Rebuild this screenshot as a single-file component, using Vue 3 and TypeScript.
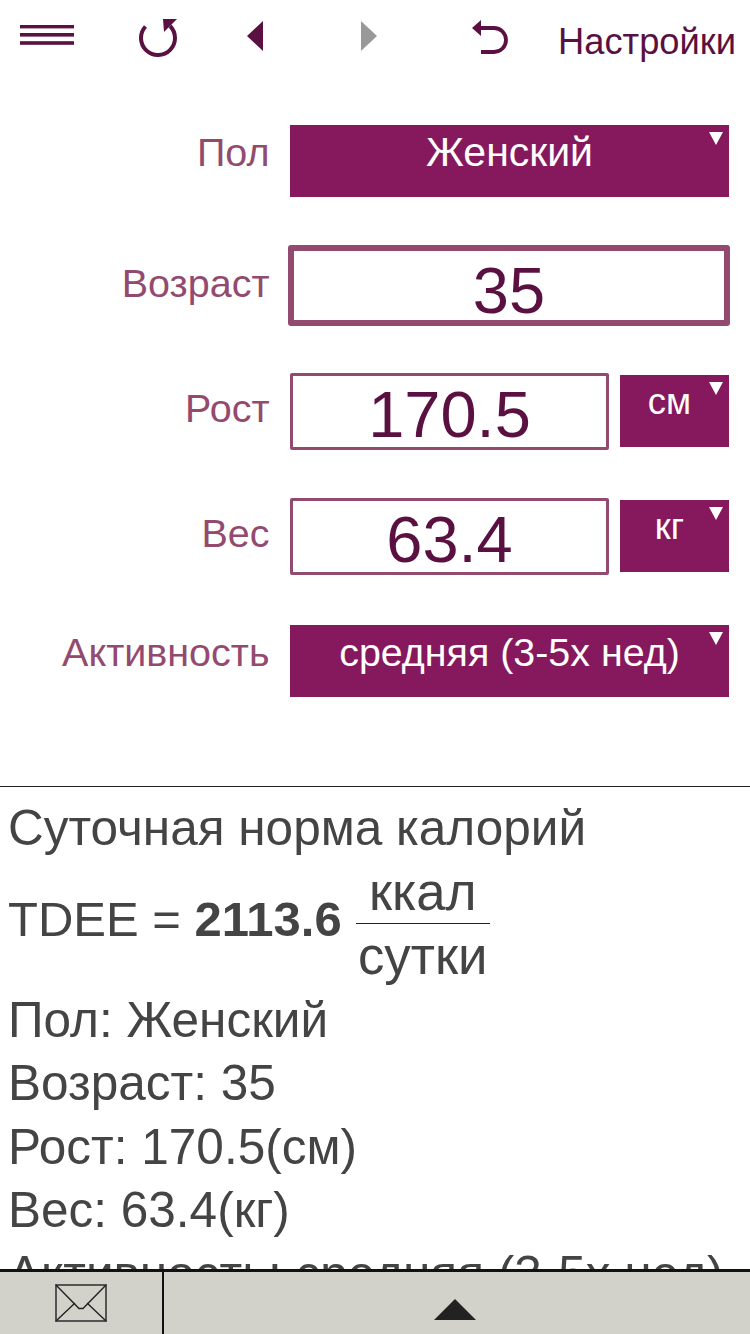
<script setup lang="ts">
const results = ['Пол: Женский', 'Возраст: 35', 'Рост: 170.5(см)', 'Вес: 63.4(кг)', 'Активность: средняя (3-5х нед)']
</script>

<template>
  <div class="page">
    <header class="toolbar">
      <svg class="icon menu" width="54" height="20" viewBox="0 0 54 20">
        <rect y="0" width="54" height="3.4" fill="#5a1040" />
        <rect y="8" width="54" height="3.6" fill="#5a1040" />
        <rect y="16.2" width="54" height="3.6" fill="#5a1040" />
      </svg>
      <svg class="icon reload" width="40" height="40" viewBox="0 0 40 40">
        <path d="M6.5 8.5 A17 17 0 1 0 31 8" fill="none" stroke="#5a1040" stroke-width="4" />
        <path d="M24 1 H38 L25 14 Z" fill="#5a1040" />
      </svg>
      <svg class="icon prev" width="16" height="30" viewBox="0 0 16 30">
        <path d="M16 0 V30 L0 15 Z" fill="#5a1040" />
      </svg>
      <svg class="icon next" width="16" height="30" viewBox="0 0 16 30">
        <path d="M0 0 V30 L16 15 Z" fill="#999" />
      </svg>
      <svg class="icon undo" width="37" height="34" viewBox="0 0 37 34">
        <path d="M7 8 H22 A12 12 0 0 1 22 32 H9" fill="none" stroke="#5a1040" stroke-width="3.8" />
        <path d="M9 0 V16 L0 8 Z" fill="#5a1040" />
      </svg>
      <span class="settings">Настройки</span>
    </header>

    <section class="form">
      <div class="row row--select">
        <label class="label">Пол</label>
        <div class="select">Женский<i class="caret" /></div>
      </div>
      <div class="row">
        <label class="label">Возраст</label>
        <div class="field field--active">35</div>
      </div>
      <div class="row">
        <label class="label">Рост</label>
        <div class="field">170.5</div>
        <div class="select select--unit">см<i class="caret" /></div>
      </div>
      <div class="row">
        <label class="label">Вес</label>
        <div class="field">63.4</div>
        <div class="select select--unit">кг<i class="caret" /></div>
      </div>
      <div class="row row--select">
        <label class="label">Активность</label>
        <div class="select select--wide">средняя (3-5х нед)<i class="caret" /></div>
      </div>
    </section>

    <section class="result">
      <div class="line">Суточная норма калорий</div>
      <div class="formula">
        <span class="tdee">TDEE = <b>2113.6</b></span>
        <span class="fraction">
          <span class="top">ккал</span>
          <span class="bottom">сутки</span>
        </span>
      </div>
      <div v-for="text in results" :key="text" class="line">{{ text }}</div>
    </section>

    <footer class="footer">
      <div class="mail">
        <svg width="52" height="38" viewBox="0 0 52 38">
          <rect x="1" y="1" width="50" height="36" fill="none" stroke="#555" stroke-width="2" />
          <path d="M1 1 L24 24.5 H28 L51 1 M1 37 L20 19 M51 37 L32 19" fill="none" stroke="#222" stroke-width="1.4" />
        </svg>
      </div>
      <div class="toggle">
        <i class="up" />
      </div>
    </footer>
  </div>
</template>

<style scoped>
.page {
  width: 750px;
  height: 1334px;
  display: flex;
  flex-direction: column;
  overflow: hidden;
  background: #fff;
  font-family: "Liberation Sans", Arial, sans-serif;
}

.toolbar {
  height: 98px;
  flex: none;
  position: relative;
  color: #5a1040;
}

.icon {
  position: absolute;
  display: block;
}
.menu { left: 20px; top: 25px; }
.reload { left: 139px; top: 18px; }
.prev { left: 247px; top: 21px; }
.next { left: 361px; top: 21px; }
.undo { left: 472px; top: 20px; }

.settings {
  position: absolute;
  right: 14px;
  top: 22px;
  font-size: 36.3px;
  line-height: 40px;
}

.form {
  flex: none;
  height: 688px;
}

.row {
  height: 125px;
  display: flex;
  align-items: center;
  padding: 0 21px 0 0;
}

.label {
  width: 269.5px;
  flex: none;
  text-align: right;
  font-size: 39.5px;
  color: #934a6f;
  position: relative;
  top: -2px;
}

.row--select .label {
  top: -8px;
}

.select {
  position: relative;
  margin-left: 20.5px;
  flex: 1;
  height: 72px;
  box-sizing: border-box;
  background: #86185e;
  color: #fff;
  font-size: 41px;
  line-height: 54px;
  text-align: center;
}

.select--wide {
  font-size: 39.4px;
}

.select--unit {
  flex: none;
  width: 109px;
  margin-left: 11px;
  font-size: 36.5px;
  padding-right: 10px;
}

.caret {
  position: absolute;
  right: 6px;
  top: 7px;
  width: 0;
  height: 0;
  border-left: 7.5px solid transparent;
  border-right: 7.5px solid transparent;
  border-top: 13px solid #fff;
}

.field {
  margin-left: 20.5px;
  margin-top: 2px;
  width: 319px;
  height: 77px;
  box-sizing: border-box;
  border: 3px solid #934a6f;
  border-radius: 2px;
  color: #5a1040;
  font-size: 65px;
  line-height: 78px;
  text-align: center;
}

.field--active {
  flex: none;
  margin-left: 18.5px;
  margin-top: 0;
  width: 442px;
  height: 81px;
  border-width: 6px;
  border-radius: 3px;
  font-size: 65px;
  line-height: 79px;
}

.result {
  flex: 1;
  min-height: 0;
  overflow: hidden;
  border-top: 1px solid #222;
  padding: 9px 8px 0;
  color: #444;
  font-size: 49.5px;
}

.line {
  height: 63.6px;
  line-height: 63.6px;
  white-space: nowrap;
}

.formula {
  display: flex;
  align-items: center;
  height: 128px;
  gap: 14px;
}

.tdee {
  font-size: 49px;
  padding-bottom: 10px;
}

.fraction {
  display: flex;
  flex-direction: column;
  align-items: center;
  width: 134px;
  font-size: 52.8px;
}

.top,
.bottom {
  line-height: 63px;
}

.top {
  width: 100%;
  text-align: center;
  border-bottom: 1px solid #222;
}

.footer {
  flex: none;
  height: 65px;
  box-sizing: border-box;
  display: flex;
  background: #d2d2ca;
  border-top: 3px solid #111;
}

.mail {
  width: 162px;
  flex: none;
  display: flex;
  justify-content: center;
  padding-top: 12px;
  border-right: 2px solid #111;
}

.toggle {
  flex: 1;
  display: flex;
  justify-content: center;
  padding: 27px 4px 0 0;
}

.up {
  width: 0;
  height: 0;
  border-left: 21px solid transparent;
  border-right: 21px solid transparent;
  border-bottom: 21px solid #222;
}
</style>
